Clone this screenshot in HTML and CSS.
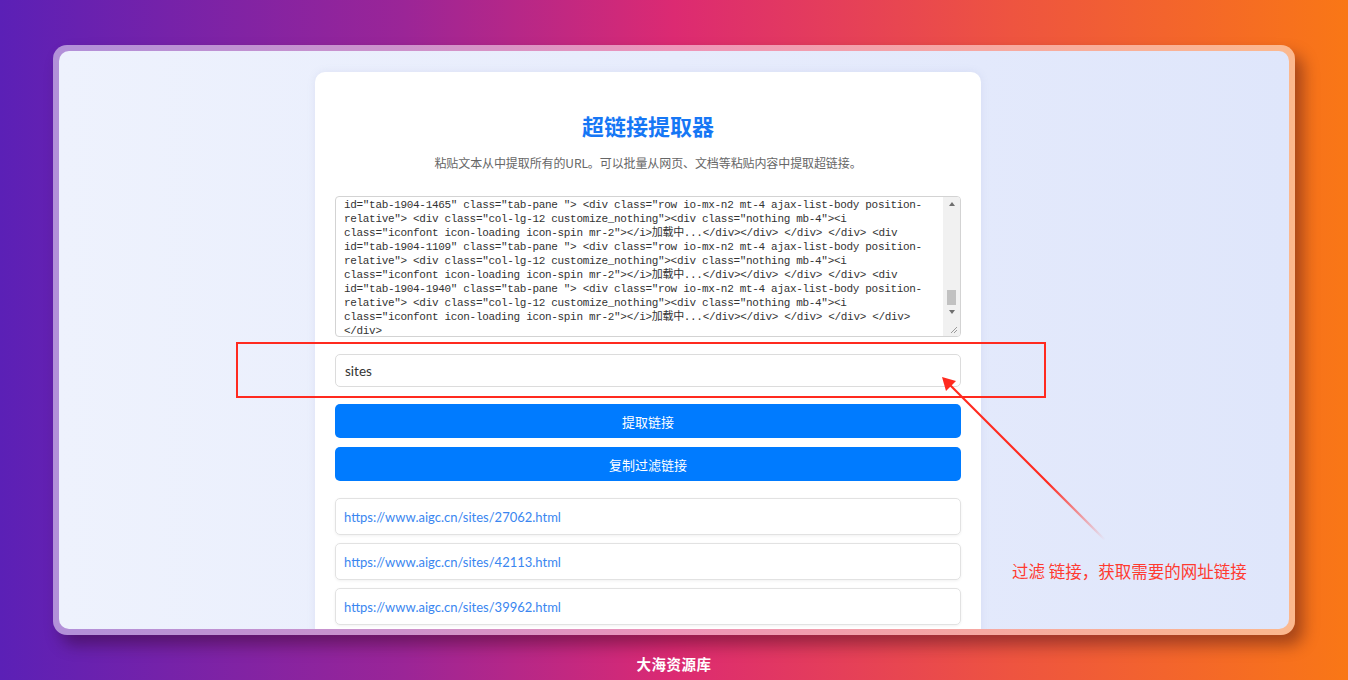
FILE: index.html
```html
<!DOCTYPE html>
<html lang="zh">
<head>
<meta charset="utf-8">
<title>超链接提取器</title>
<link rel="stylesheet" href="styles.css">
</head>
<body>
<div class="page">
  <div class="frame">
    <div class="frame-inner">
      <div class="card">
        <h1 class="title">超链接提取器</h1>
        <p class="subtitle">粘贴文本从中提取所有的URL。可以批量从网页、文档等粘贴内容中提取超链接。</p>
        <div class="textarea">
          <div class="ta-text">
            <div class="ta-line">id="tab-1904-1465" class="tab-pane "> &lt;div class="row io-mx-n2 mt-4 ajax-list-body position-</div>
            <div class="ta-line">relative"> &lt;div class="col-lg-12 customize_nothing">&lt;div class="nothing mb-4">&lt;i</div>
            <div class="ta-line">class="iconfont icon-loading icon-spin mr-2">&lt;/i>加载中...&lt;/div>&lt;/div> &lt;/div> &lt;/div> &lt;div</div>
            <div class="ta-line">id="tab-1904-1109" class="tab-pane "> &lt;div class="row io-mx-n2 mt-4 ajax-list-body position-</div>
            <div class="ta-line">relative"> &lt;div class="col-lg-12 customize_nothing">&lt;div class="nothing mb-4">&lt;i</div>
            <div class="ta-line">class="iconfont icon-loading icon-spin mr-2">&lt;/i>加载中...&lt;/div>&lt;/div> &lt;/div> &lt;/div> &lt;div</div>
            <div class="ta-line">id="tab-1904-1940" class="tab-pane "> &lt;div class="row io-mx-n2 mt-4 ajax-list-body position-</div>
            <div class="ta-line">relative"> &lt;div class="col-lg-12 customize_nothing">&lt;div class="nothing mb-4">&lt;i</div>
            <div class="ta-line">class="iconfont icon-loading icon-spin mr-2">&lt;/i>加载中...&lt;/div>&lt;/div> &lt;/div> &lt;/div> &lt;/div></div>
            <div class="ta-line">&lt;/div></div>
          </div>
          <div class="scrollbar">
            <div class="sb-up"></div>
            <div class="sb-track"><div class="sb-thumb"></div></div>
            <div class="sb-down"></div>
            <div class="sb-corner">
              <svg class="grip" width="8" height="8" viewBox="0 0 8 8"><path d="M7 1 L1 7 M7 4 L4 7" stroke="#9a9a9a" stroke-width="1" fill="none"/></svg>
            </div>
          </div>
        </div>
        <div class="filter">sites</div>
        <button class="btn">提取链接</button>
        <button class="btn btn-second">复制过滤链接</button>
        <div class="links">
          <div class="link-item"><a class="link">https://www.aigc.cn/sites/27062.html</a></div>
          <div class="link-item"><a class="link">https://www.aigc.cn/sites/42113.html</a></div>
          <div class="link-item"><a class="link">https://www.aigc.cn/sites/39962.html</a></div>
        </div>
      </div>
    </div>
  </div>
  <div class="footer">大海资源库</div>

  <div class="mark-box"></div>
  <svg class="mark-arrow" width="200" height="200" viewBox="0 0 200 200">
    <defs>
      <linearGradient id="fade" x1="22" y1="17" x2="185" y2="180" gradientUnits="userSpaceOnUse">
        <stop offset="0" stop-color="#ff2a1f"/>
        <stop offset="0.65" stop-color="#ff2a1f"/>
        <stop offset="1" stop-color="#ff2a1f" stop-opacity="0"/>
      </linearGradient>
    </defs>
    <path d="M185 180 L24 19" stroke="url(#fade)" stroke-width="2.2" fill="none"/>
    <path d="M22 17 L26 31 L36 21 Z" fill="#ff2a1f"/>
  </svg>
  <div class="mark-text">过滤 链接，获取需要的网址链接</div>
</div>
</body>
</html>
```

FILE: styles.css
```css
* { box-sizing: border-box; }
html, body { margin: 0; padding: 0; }
body {
  width: 1348px;
  height: 680px;
  overflow: hidden;
  font-family: "Noto Sans CJK SC", "Noto Sans", sans-serif;
  background: linear-gradient(90deg, #5b20b6 0%, #9b2597 30%, #dc2a72 50%, #ee5440 75%, #f97716 100%);
}
.page {
  position: relative;
  width: 1348px;
  height: 680px;
  padding-top: 45px;
}
.frame {
  width: 1242px;
  margin: 0 auto;
  padding: 6px;
  border-radius: 14px;
  background: rgba(255, 255, 255, 0.5);
  box-shadow: 8px 10px 16px rgba(40, 0, 20, 0.4);
}
.frame-inner {
  height: 578px;
  overflow: hidden;
  border-radius: 10px;
  background: linear-gradient(90deg, #eef2fd 0%, #e7ecfc 50%, #dfe6fb 100%);
  padding-top: 21px;
  padding-left: 256px;
}
.card {
  width: 666px;
  background: #fff;
  border-radius: 10px;
  padding: 38px 20px 20px;
  box-shadow: 0 0 8px rgba(120, 130, 180, 0.12);
}
.title {
  margin: 0;
  text-align: center;
  font-size: 22px;
  line-height: 30px;
  font-weight: 700;
  color: #1677f5;
}
.subtitle {
  margin: 14px 0 0;
  text-align: center;
  font-size: 12px;
  letter-spacing: -0.1px;
  line-height: 18px;
  color: #666;
}
.textarea {
  margin-top: 24px;
  height: 141px;
  border: 1px solid #d3d3d3;
  border-radius: 4px;
  display: flex;
  overflow: hidden;
}
.ta-text {
  flex: 1;
  min-width: 0;
  overflow: hidden;
  padding: 1px 0 0 8px;
  font-family: "Liberation Mono", "Noto Sans CJK SC", monospace;
  font-size: 11px;
  letter-spacing: -0.32px;
  line-height: 14px;
  color: #333;
}
.ta-line { white-space: pre; }
.scrollbar {
  width: 17px;
  flex: none;
  display: flex;
  flex-direction: column;
  background: #f1f1f1;
}
.sb-up, .sb-down {
  height: 14px;
  display: flex;
  justify-content: center;
  align-items: center;
}
.sb-up::before {
  content: "";
  border-left: 3px solid transparent;
  border-right: 3px solid transparent;
  border-bottom: 4px solid #6f6f6f;
}
.sb-down::before {
  content: "";
  border-left: 3px solid transparent;
  border-right: 3px solid transparent;
  border-top: 4px solid #6f6f6f;
}
.sb-track {
  flex: 1;
  display: flex;
  flex-direction: column;
  justify-content: flex-end;
  align-items: center;
}
.sb-thumb {
  width: 9px;
  height: 15px;
  background: #c1c1c1;
}
.sb-corner {
  height: 17px;
  display: flex;
  justify-content: flex-end;
  align-items: flex-end;
  padding: 0 2px 2px 0;
}
.filter {
  margin-top: 17px;
  height: 33px;
  border: 1px solid #dcdcdc;
  border-radius: 5px;
  padding: 0 9px;
  display: flex;
  align-items: center;
  font-family: Lato, "Noto Sans", sans-serif;
  font-size: 13.5px;
  color: #333;
}
.btn {
  display: flex;
  justify-content: center;
  align-items: center;
  width: 100%;
  height: 34px;
  margin-top: 17px;
  border: none;
  border-radius: 5px;
  background: #007bff;
  color: #fff;
  font-family: "Noto Sans CJK SC", sans-serif;
  font-size: 13px;
  padding: 0;
}
.btn-second { margin-top: 9px; }
.links {
  margin-top: 17px;
  display: flex;
  flex-direction: column;
  gap: 8px;
}
.link-item {
  height: 37px;
  border: 1px solid #e2e2e2;
  border-radius: 5px;
  box-shadow: 0 1px 3px rgba(0, 0, 0, 0.06);
  padding: 0 8px;
  display: flex;
  align-items: center;
}
.link {
  font-family: Lato, "Noto Sans", sans-serif;
  font-size: 13px;
  color: #3a86f0;
  text-decoration: none;
}
.footer {
  margin-top: 19px;
  text-align: center;
  font-size: 14.5px;
  font-weight: 700;
  color: #fff;
  line-height: 20px;
  letter-spacing: 0.5px;
}
.mark-box {
  position: absolute;
  left: 236px;
  top: 342px;
  width: 810px;
  height: 56px;
  border: 2px solid #ff2a1f;
}
.mark-arrow {
  position: absolute;
  left: 920px;
  top: 360px;
}
.mark-text {
  position: absolute;
  left: 1012px;
  top: 560px;
  font-size: 16.5px;
  line-height: 22px;
  color: #ff3a30;
}
```
